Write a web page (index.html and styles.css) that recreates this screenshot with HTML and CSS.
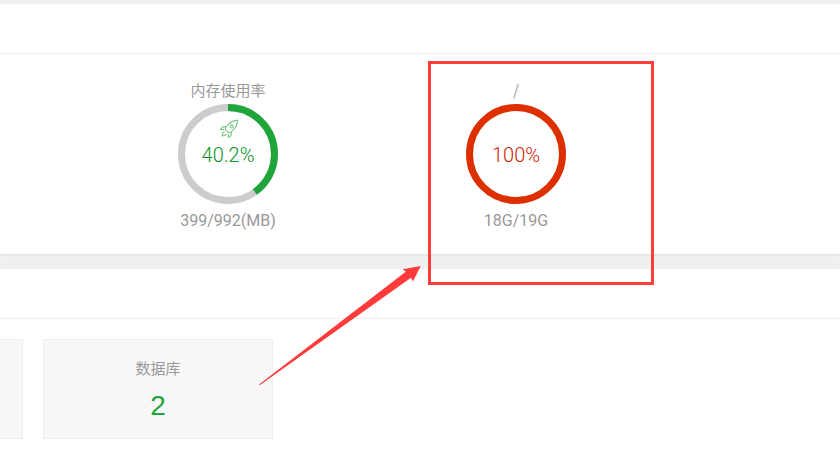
FILE: index.html
```html
<!DOCTYPE html>
<html lang="zh-CN">
<head>
<meta charset="utf-8">
<title>状态</title>
<link rel="stylesheet" href="styles.css">
</head>
<body>
<div class="page">
  <section class="panel status">
    <header class="panel-head"></header>
    <div class="gauges">
      <div class="gauge">
        <h3 class="gauge-title">内存使用率</h3>
        <div class="dial">
          <svg class="ring" viewBox="0 0 100 100" width="100" height="100">
            <circle class="track" cx="50" cy="50" r="46.5"></circle>
            <circle class="value value-ok" cx="50" cy="50" r="46.5" pathLength="100" stroke-dasharray="40.2 100" transform="rotate(-90 50 50)"></circle>
          </svg>
          <svg class="rocket" viewBox="0 0 20 20" width="20" height="20">
            <path d="M18.6 1.4c-3.6.1-6.6 1.300-8.900 3.700L6.600 8.400l-.1 2.200 2.900 2.900 2.200-.1 3.200-3.100c2.400-2.300 3.600-5.300 3.800-8.900Z"></path>
            <circle cx="12.6" cy="7.4" r="1.5"></circle>
            <path d="M7 7.600 3.600 7.900 1.600 10.400l3.600.1M12.400 13l-.3 3.400-2.500 2-.1-3.600M5.300 12.400c-1.400.8-2 2.200-2.200 4.500 2.300-.2 3.700-.8 4.500-2.200"></path>
          </svg>
          <span class="percent percent-ok">40.2%</span>
        </div>
        <p class="gauge-sub">399/992(MB)</p>
      </div>
      <div class="gauge">
        <h3 class="gauge-title">/</h3>
        <div class="dial">
          <svg class="ring" viewBox="0 0 100 100" width="100" height="100">
            <circle class="value value-full" cx="50" cy="50" r="46.5"></circle>
          </svg>
          <span class="percent percent-full">100%</span>
        </div>
        <p class="gauge-sub">18G/19G</p>
      </div>
    </div>
  </section>
  <section class="panel overview">
    <header class="panel-head"></header>
    <div class="cards">
      <div class="card"></div>
      <div class="card">
        <span class="card-label">数据库</span>
        <span class="card-num">2</span>
      </div>
    </div>
  </section>
  <div class="callout-box"></div>
  <svg class="callout-arrow" viewBox="0 0 840 457" width="840" height="457">
    <polygon points="259,384.500 405.700,271.700 402.700,269.300 420.700,266 413,281.500 411,277.700 260,385"></polygon>
  </svg>
</div>
</body>
</html>
```
FILE: styles.css
```css
* {
  box-sizing: border-box;
}

html,
body {
  margin: 0;
  padding: 0;
}

body {
  background: #fff;
  font-family: Roboto, "Noto Sans CJK SC", sans-serif;
  overflow: hidden;
}

.page {
  position: relative;
  width: 840px;
  height: 457px;
  overflow: hidden;
  background: #f0f0f0;
  padding-top: 4px;
}

.panel {
  background: #fff;
}

.panel-head {
  height: 50px;
  border-bottom: 1px solid #eeeeee;
}

.status {
  height: 251px;
  border-bottom: 1px solid #e4e4e4;
  box-shadow: 0 1px 2px rgba(0, 0, 0, 0.05);
}

.overview {
  margin-top: 14px;
  height: 200px;
}

.gauges {
  display: flex;
  padding: 26px 0 0 84px;
}

.gauge {
  width: 288px;
  display: flex;
  flex-direction: column;
  align-items: center;
}

.gauge-title {
  margin: 0;
  height: 24px;
  font: 400 15px/20px "Noto Sans CJK SC", Roboto, sans-serif;
  color: #999;
}

.dial {
  position: relative;
  width: 100px;
  height: 100px;
  display: flex;
  align-items: center;
  justify-content: center;
}

.ring {
  position: absolute;
  inset: 0;
  fill: none;
}

.track {
  stroke: #cccccc;
  stroke-width: 7;
}

.value {
  stroke-width: 7;
}

.value-ok {
  stroke: #20a53a;
}

.value-full {
  stroke: #dd2f00;
}

.rocket {
  position: absolute;
  left: 41px;
  top: 15px;
  fill: none;
  stroke: #20a53a;
  stroke-width: 1.100;
  opacity: 0.6;
}

.percent {
  position: relative;
  margin-top: 1px;
  font-size: 20px;
  font-weight: 300;
  line-height: 24px;
}

.percent-ok {
  color: #0a9426;
}

.percent-full {
  color: #d02000;
}

.gauge-sub {
  margin: 7px 0 0;
  font-size: 16px;
  line-height: 20px;
  color: #999;
}

.cards {
  display: flex;
  gap: 20px;
  margin: 20px 0 0 -207px;
}

.card {
  width: 230px;
  height: 100px;
  flex: none;
  background: #f8f8f8;
  border: 1px solid #eeeeee;
  display: flex;
  flex-direction: column;
  align-items: center;
  padding-top: 18px;
}

.card-label {
  font: 400 15px/20px "Noto Sans CJK SC", sans-serif;
  color: #999;
}

.card-num {
  margin-top: 10px;
  font: 400 28px/36px "Liberation Sans", Arial, sans-serif;
  color: #20a53a;
}

.callout-box {
  position: absolute;
  left: 428px;
  top: 61px;
  width: 226px;
  height: 224px;
  border: 3px solid #ff3b3b;
}

.callout-arrow {
  position: absolute;
  left: 0;
  top: 0;
  fill: #ff3b3b;
}
```
